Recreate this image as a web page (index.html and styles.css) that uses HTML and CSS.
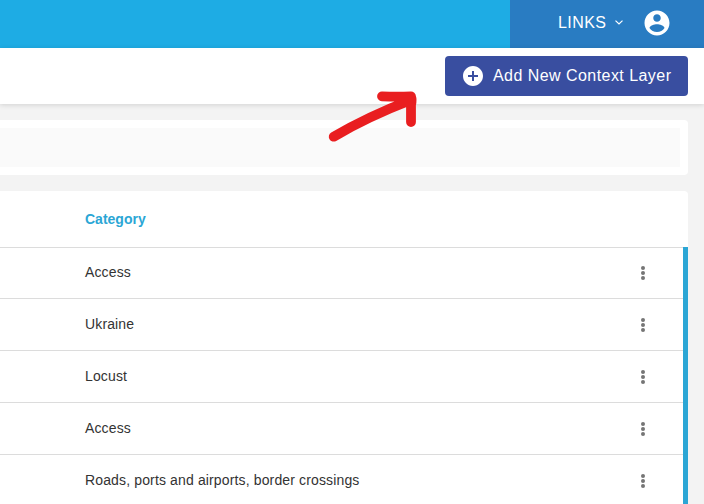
FILE: index.html
```html
<!DOCTYPE html>
<html lang="en">
<head>
<meta charset="utf-8">
<title>Context Layers</title>
<link rel="stylesheet" href="styles.css">
</head>
<body>
<header class="topbar">
  <nav class="topnav">
    <span class="links">LINKS</span>
    <svg class="chevron" width="8" height="5" viewBox="0 0 8 5"><path d="M.5 .6 4 4 7.5 .6"/></svg>
    <svg class="account" width="30" height="30" viewBox="0 0 24 24"><path d="M12 2C6.480 2 2 6.480 2 12s4.480 10 10 10 10-4.480 10-10S17.520 2 12 2zm0 3c1.660 0 3 1.340 3 3s-1.340 3-3 3-3-1.340-3-3 1.340-3 3-3zm0 14.200c-2.500 0-4.710-1.280-6-3.220.030-1.990 4-3.080 6-3.080 1.990 0 5.970 1.090 6 3.080-1.290 1.940-3.500 3.220-6 3.220z"/></svg>
  </nav>
</header>
<div class="toolbar">
  <button class="add">
    <svg width="24" height="24" viewBox="0 0 24 24"><path d="M12 2C6.480 2 2 6.480 2 12s4.480 10 10 10 10-4.480 10-10S17.520 2 12 2zm5 11h-4v4h-2v-4H7v-2h4V7h2v4h4v2z"/></svg>
    <span>Add New Context Layer</span>
  </button>
</div>
<main class="content">
  <section class="filter"><div class="field"></div></section>
  <section class="table">
    <div class="head">Category</div>
    <div class="rows">
      <div class="row first"><span>Access</span><svg class="more" width="20" height="20" viewBox="0 0 20 20"><circle cx="10" cy="5" r="2"/><circle cx="10" cy="10" r="2"/><circle cx="10" cy="15" r="2"/></svg></div>
      <div class="row"><span>Ukraine</span><svg class="more" width="20" height="20" viewBox="0 0 20 20"><circle cx="10" cy="5" r="2"/><circle cx="10" cy="10" r="2"/><circle cx="10" cy="15" r="2"/></svg></div>
      <div class="row"><span>Locust</span><svg class="more" width="20" height="20" viewBox="0 0 20 20"><circle cx="10" cy="5" r="2"/><circle cx="10" cy="10" r="2"/><circle cx="10" cy="15" r="2"/></svg></div>
      <div class="row"><span>Access</span><svg class="more" width="20" height="20" viewBox="0 0 20 20"><circle cx="10" cy="5" r="2"/><circle cx="10" cy="10" r="2"/><circle cx="10" cy="15" r="2"/></svg></div>
      <div class="row"><span>Roads, ports and airports, border crossings</span><svg class="more" width="20" height="20" viewBox="0 0 20 20"><circle cx="10" cy="5" r="2"/><circle cx="10" cy="10" r="2"/><circle cx="10" cy="15" r="2"/></svg></div>
    </div>
  </section>
</main>
<svg class="arrow" width="100" height="60" viewBox="0 0 100 60"><path d="M8.700 51.700Q42 32 86 15M57 11.300Q72 12 86 11.300M86 11.500Q87.200 15 86 20V37"/></svg>
</body>
</html>
```
FILE: styles.css
```css
* { box-sizing: border-box; }
body {
  margin: 0;
  height: 504px;
  overflow: hidden;
  display: flex;
  flex-direction: column;
  position: relative;
  background: #f3f3f3;
  font-family: "Liberation Sans", Arial, sans-serif;
}
.topbar {
  flex: none;
  height: 48px;
  display: flex;
  justify-content: flex-end;
  background: #1eace4;
}
.topnav {
  width: 194px;
  padding: 0 32px 3px 48px;
  display: flex;
  align-items: center;
  background: #297cc2;
  color: #fff;
}
.links { font-size: 16px; letter-spacing: .45px; }
.chevron { margin-left: 8px; fill: none; stroke: #fff; stroke-width: 1.2; }
.account { margin-left: auto; fill: #fff; }
.toolbar {
  flex: none;
  height: 56px;
  padding: 8px 16px;
  display: flex;
  justify-content: flex-end;
  background: #fff;
  box-shadow: 0 1px 5px rgba(0, 0, 0, .14);
}
.add {
  width: 243px;
  height: 40px;
  padding: 0 0 1px 16px;
  border: 0;
  border-radius: 4px;
  display: flex;
  align-items: center;
  gap: 8px;
  background: #394ea0;
  color: #fff;
  font: 16px "Liberation Sans", Arial, sans-serif;
  letter-spacing: .45px;
  white-space: nowrap;
}
.add svg { fill: #fff; }
.content {
  flex: none;
  padding: 16px 16px 0 0;
  display: flex;
  flex-direction: column;
  gap: 16px;
}
.filter {
  height: 55px;
  padding: 8px 8px 8px 0;
  border-radius: 0 4px 4px 0;
  background: #fff;
}
.field { height: 39px; background: #fafafa; }
.table { background: #fff; border-radius: 0 4px 0 0; font-size: 14px; }
.head {
  height: 56px;
  padding-left: 85px;
  line-height: 56px;
  font-weight: bold;
  color: #2ba6d5;
}
.rows { border-right: 5px solid #2ba6d5; }
.row {
  height: 52px;
  padding: 0 30px 0 85px;
  border-top: 1px solid #dcdcdc;
  display: flex;
  align-items: center;
  justify-content: space-between;
  color: #333;
  letter-spacing: .14px;
}
.row span { padding-bottom: 2px; }
.first { height: 51px; }
.more { fill: #757575; }
.arrow {
  position: absolute;
  left: 325px;
  top: 85px;
  fill: none;
  stroke: #e91e20;
  stroke-width: 9.8;
  stroke-linecap: round;
  stroke-linejoin: round;
}
```
